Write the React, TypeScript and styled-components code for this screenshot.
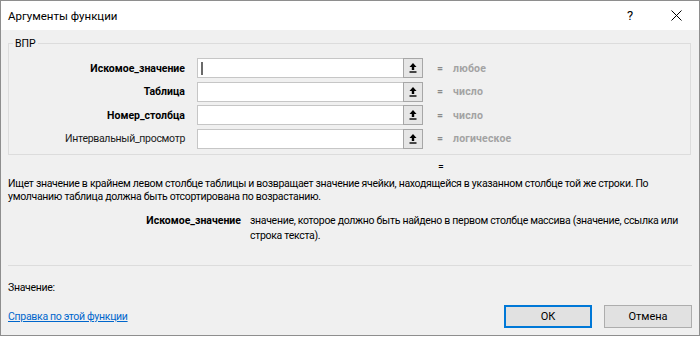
import React from 'react';
import styled, { createGlobalStyle } from 'styled-components';

const Global = createGlobalStyle`
  html, body { margin: 0; padding: 0; background: #ffffff; }
  body { font-family: Roboto, 'Noto Sans', 'Liberation Sans', sans-serif; color: #000; }
  * { box-sizing: border-box; }
`;

const Screen = styled.div`
  width: 700px;
  height: 337px;
  overflow: hidden;
  background: #ffffff;
`;

const Window = styled.div`
  width: 700px;
  height: 336px;
  border: 1px solid #8e8e8e;
  display: flex;
  flex-direction: column;
  background: #f0f0f0;
`;

const TitleBar = styled.div`
  height: 29px;
  flex: none;
  background: #ffffff;
  display: flex;
  align-items: center;
  padding-left: 7px;
`;

const Title = styled.div`
  font-size: 11.5px;
  color: #000;
  flex: 1;
`;

const TitleButton = styled.div`
  width: 46px;
  height: 29px;
  display: flex;
  align-items: center;
  justify-content: center;
  font-size: 13px;
  color: #000;
`;

const Body = styled.div`
  flex: 1;
  display: flex;
  flex-direction: column;
  padding: 0 7px 7px 7px;
  font-size: 10.5px;
  letter-spacing: -0.3px;
  color: #000;
`;

const GroupBox = styled.div`
  margin: 13px 1px 0 0;
  border: 1px solid #dcdcdc;
  padding: 0 0 5px 0;
`;

const Legend = styled.div`
  margin: -8px 0 0 4px;
  padding: 0 2px;
  width: fit-content;
  line-height: 15px;
  background: #f0f0f0;
  letter-spacing: 0;
`;

const Rows = styled.div`
  padding-top: 7px;
  display: flex;
  flex-direction: column;
  gap: 3.67px;
`;

const Row = styled.div`
  display: flex;
  align-items: center;
  height: 20px;
`;

const ArgLabel = styled.div<{ $bold?: boolean }>`
  width: 176px;
  text-align: right;
  font-weight: ${p => (p.$bold ? 700 : 400)};
  letter-spacing: ${p => (p.$bold ? '0' : '-0.3px')};
  color: ${p => (p.$bold ? '#000' : '#1a1a1a')};
  white-space: nowrap;
`;

const ArgField = styled.div`
  margin-left: 12px;
  width: 226px;
  height: 20px;
  display: flex;
  border: 1px solid #c6c6c6;
  background: #fff;
`;

const ArgInput = styled.div`
  flex: 1;
  display: flex;
  align-items: center;
  padding-left: 3px;
`;

const Caret = styled.div`
  width: 2px;
  height: 13px;
  background: #6a6a6a;
`;

const RefButton = styled.div`
  width: 20px;
  margin: -1px -1px -1px 0;
  border: 1px solid #a7a7a7;
  background: #e6e6e6;
  display: flex;
  align-items: center;
  justify-content: center;
`;

const Eq = styled.div`
  margin-left: 14px;
  width: 6px;
  color: #8a8a8a;
  font-weight: 700;
`;

const TypeValue = styled.div`
  margin-left: 10px;
  color: #a3a3a3;
  font-weight: 700;
  letter-spacing: 0.2px;
`;

const ResultEq = styled.div`
  margin-top: 4px;
  padding-left: 430px;
  line-height: 15px;
`;

const Description = styled.div`
  margin-top: 3px;
  line-height: 13px;
`;

const ArgHelp = styled.div`
  margin-top: 10px;
  display: flex;
  line-height: 15px;
`;

const ArgHelpName = styled.div`
  width: 233px;
  text-align: right;
  font-weight: 700;
  letter-spacing: 0;
  flex: none;
`;

const ArgHelpText = styled.div`
  margin-left: 9px;
  flex: 1;
`;

const Separator = styled.div`
  margin-top: 22px;
  height: 1px;
  background: #dcdcdc;
`;

const ValueLine = styled.div`
  margin-top: 14px;
  line-height: 15px;
`;

const Footer = styled.div`
  margin-top: auto;
  display: flex;
  align-items: center;
  height: 23px;
`;

const HelpLink = styled.a`
  color: #0066cc;
  text-decoration: underline;
  flex: 1;
  cursor: pointer;
`;

const DialogButton = styled.button<{ $default?: boolean }>`
  width: 88px;
  height: 23px;
  margin-left: ${p => (p.$default ? '0' : '12px')};
  background: #e1e1e1;
  border: ${p => (p.$default ? '2px solid #0078d7' : '1px solid #adadad')};
  font-family: inherit;
  font-size: 11px;
  color: #000;
  padding: 0;
`;

const UpArrow = () => (
  <svg width="8" height="10" viewBox="0 0 8 10">
    <path d="M4 0 L7.5 4 H5.2 V7 H2.8 V4 H0.5 Z" fill="#000" />
    <rect x="0.5" y="8.3" width="7" height="1.4" fill="#000" />
  </svg>
);

const CloseIcon = () => (
  <svg width="11" height="11" viewBox="0 0 11 11">
    <path d="M0.5 0.5 L10.5 10.5 M10.5 0.5 L0.5 10.5" stroke="#000" strokeWidth="1" />
  </svg>
);

const args = [
  { name: 'Искомое_значение', bold: true, type: 'любое', caret: true },
  { name: 'Таблица', bold: true, type: 'число' },
  { name: 'Номер_столбца', bold: true, type: 'число' },
  { name: 'Интервальный_просмотр', bold: false, type: 'логическое' },
];

export default function App() {
  return (
    <Screen>
      <Global />
      <Window>
        <TitleBar>
          <Title>Аргументы функции</Title>
          <TitleButton>?</TitleButton>
          <TitleButton>
            <CloseIcon />
          </TitleButton>
        </TitleBar>
        <Body>
          <GroupBox>
            <Legend>ВПР</Legend>
            <Rows>
              {args.map(a => (
                <Row key={a.name}>
                  <ArgLabel $bold={a.bold}>{a.name}</ArgLabel>
                  <ArgField>
                    <ArgInput>{a.caret && <Caret />}</ArgInput>
                    <RefButton>
                      <UpArrow />
                    </RefButton>
                  </ArgField>
                  <Eq>=</Eq>
                  <TypeValue>{a.type}</TypeValue>
                </Row>
              ))}
            </Rows>
          </GroupBox>
          <ResultEq>=</ResultEq>
          <Description>
            Ищет значение в крайнем левом столбце таблицы и возвращает значение ячейки, находящейся в указанном столбце той же строки. По
            умолчанию таблица должна быть отсортирована по возрастанию.
          </Description>
          <ArgHelp>
            <ArgHelpName>Искомое_значение</ArgHelpName>
            <ArgHelpText>
              значение, которое должно быть найдено в первом столбце массива (значение, ссылка или строка текста).
            </ArgHelpText>
          </ArgHelp>
          <Separator />
          <ValueLine>Значение:</ValueLine>
          <Footer>
            <HelpLink>Справка по этой функции</HelpLink>
            <DialogButton $default>ОК</DialogButton>
            <DialogButton>Отмена</DialogButton>
          </Footer>
        </Body>
      </Window>
    </Screen>
  );
}
